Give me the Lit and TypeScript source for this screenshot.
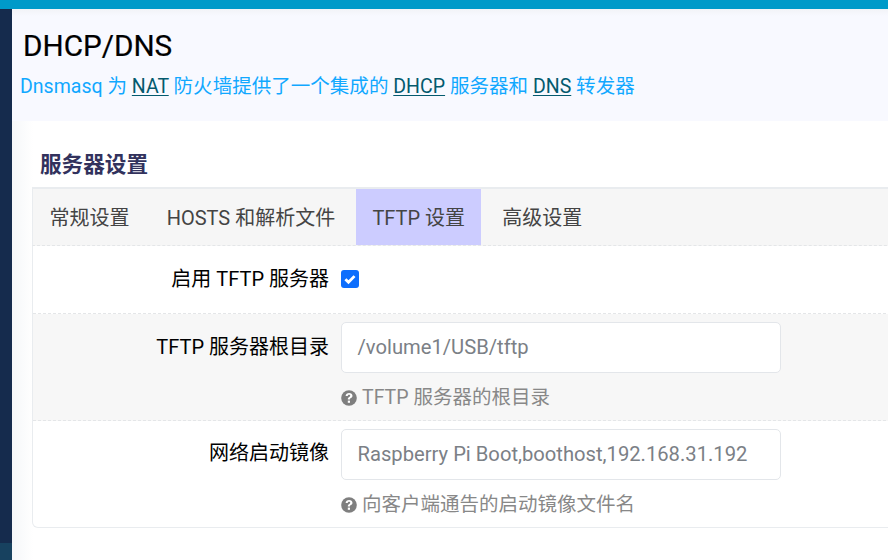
import { LitElement, html, css } from "lit";
import { customElement } from "lit/decorators.js";

@customElement("app-root")
export class AppRoot extends LitElement {
  static styles = css`
    :host { display: block; width: 888px; height: 560px; overflow: hidden; background: #fff;
      font-family: Roboto, "Noto Sans CJK SC", sans-serif; font-size: 20px; color: #000; }
    .top { height: 9px; background: #009ac9; }
    .body { display: flex; height: 551px; }
    .side { width: 12px; flex: none; display: flex; flex-direction: column; }
    .side .a { height: 534px; background: #152b4d; }
    .side .b { flex: 1; background: #17415f; }
    .main { flex: 1; min-width: 0; background: linear-gradient(90deg, #f5f7f9 0, #fff 21px); }
    .head { height: 112px; box-sizing: border-box; background: linear-gradient(180deg, #f2f3f7 0, #f8f9ff 7px); padding: 17px 0 0 8px; }
    h1 { margin: 0 0 0 3px; font-size: 29.7px; font-weight: 400; line-height: 40px; color: #000; -webkit-text-stroke: 0.2px #000; }
    .desc { margin: 3px 0 0; line-height: 36px; color: #11a8ff; font-size: 19.55px; white-space: nowrap; }
    .desc u { color: #045a6e; text-underline-offset: 2px; }
    .section { padding: 0 0 0 20px; width: 900px; }
    h2 { margin: 0; padding: 28px 0 0 8px; font-size: 21.6px; line-height: 32px; height: 66px; box-sizing: border-box; color: #32325d; font-weight: 700; }
    .tabs { display: flex; gap: 4.7px; height: 59px; box-sizing: border-box; background: #f6f6f6; border-top: 2px solid #e9ecef; border-bottom: 1px dashed #e4e6e8; border-left: 1px solid #e9ecef; }
    .tab { padding: 2px 16px 0 16.5px; line-height: 54px; color: #444; height: 56px; box-sizing: border-box; white-space: nowrap; }
    .tab.active { background: #ccf; }
    .card { border: 1px solid #e9ecef; border-top: 0; border-radius: 0 0 6px 6px; }
    .row { display: flex; border-bottom: 1px dashed #e4e6e8; }
    .row:last-child { border-bottom: 0; }
    .row.alt { background: #f7f7f7; }
    .label { width: 296px; flex: none; text-align: right; line-height: 28px; white-space: nowrap; }
    .val { margin-left: 12px; flex: 1; min-width: 0; }
    .r1 { height: 68px; padding-top: 19px; box-sizing: border-box; }
    .r2 { height: 107px; padding-top: 8px; box-sizing: border-box; }
    .r2 .label { padding-top: 11px; }
    .r3 { height: 106px; padding-top: 8px; box-sizing: border-box; }
    .r3 .label { padding-top: 10px; }
    .check { width: 18px; height: 18px; border-radius: 3px; background: #0d6efd; display: flex; align-items: center; justify-content: center; margin-top: 5px; }
    .input { width: 440px; height: 51px; box-sizing: border-box; border: 1px solid #e3e6ea; border-radius: 5px; background: #fff; padding: 0 15.5px; line-height: 48px; color: #7b8086; white-space: nowrap; font-size: 20.2px; }
    .hint { display: flex; align-items: center; gap: 5px; margin-top: 11px; color: #888; line-height: 28px; white-space: nowrap; font-size: 19.5px; }
    .hint svg { flex: none; }
  `;

  private hintIcon() {
    return html`<svg width="16" height="16" viewBox="0 0 16 16" aria-hidden="true">
      <circle cx="8" cy="8" r="7.8" fill="#7f7f7f"></circle>
      <path d="M4.6 6C4.7 4 6.2 2.9 8.1 2.9c2 0 3.4 1.2 3.4 2.8 0 1.3-.8 1.9-1.6 2.4-.7.5-.9.7-.9 1.3H6.8c0-1.3.5-1.9 1.3-2.4.7-.5 1.1-.8 1.1-1.3 0-.6-.5-.9-1.1-.9-.8 0-1.2.5-1.4 1.2H4.6z" fill="#fff"></path>
      <rect x="6.8" y="10.6" width="2.2" height="2.2" fill="#fff"></rect>
    </svg>`;
  }

  render() {
    return html`
      <div class="top"></div>
      <div class="body">
        <div class="side"><div class="a"></div><div class="b"></div></div>
        <div class="main">
          <div class="head">
            <h1>DHCP/DNS</h1>
            <p class="desc">Dnsmasq 为 <u>NAT</u> 防火墙提供了一个集成的 <u>DHCP</u> 服务器和 <u>DNS</u> 转发器</p>
          </div>
          <div class="section">
            <h2>服务器设置</h2>
            <div class="tabs">
              <div class="tab">常规设置</div>
              <div class="tab">HOSTS 和解析文件</div>
              <div class="tab active">TFTP 设置</div>
              <div class="tab">高级设置</div>
            </div>
            <div class="card">
              <div class="row r1">
                <div class="label">启用 TFTP 服务器</div>
                <div class="val"><div class="check">
                  <svg width="14" height="14" viewBox="0 0 14 14"><path d="M2.4 7.2l3.1 3.1 6-6.2" fill="none" stroke="#fff" stroke-width="2.8"></path></svg>
                </div></div>
              </div>
              <div class="row alt r2">
                <div class="label">TFTP 服务器根目录</div>
                <div class="val">
                  <div class="input">/volume1/USB/tftp</div>
                  <div class="hint">${this.hintIcon()}<span>TFTP 服务器的根目录</span></div>
                </div>
              </div>
              <div class="row r3">
                <div class="label">网络启动镜像</div>
                <div class="val">
                  <div class="input">Raspberry Pi Boot,boothost,192.168.31.192</div>
                  <div class="hint">${this.hintIcon()}<span>向客户端通告的启动镜像文件名</span></div>
                </div>
              </div>
            </div>
          </div>
        </div>
      </div>
    `;
  }
}
